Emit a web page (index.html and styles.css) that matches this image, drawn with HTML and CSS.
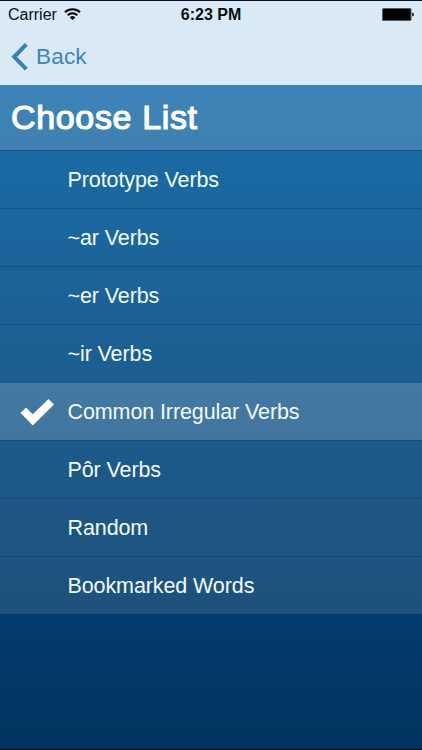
FILE: index.html
```html
<!DOCTYPE html>
<html lang="en">
<head>
    <meta charset="UTF-8">
    <meta name="viewport" content="width=device-width, initial-scale=1.0">
    <title>Choose List</title>
    <link rel="stylesheet" href="styles.css">
</head>
<body>
    <div class="screen">
        <!-- Status bar -->
        <div class="status-bar">
            <div class="carrier">
                <span>Carrier</span>
                <svg class="wifi" width="17" height="13" viewBox="0 0 17 13">
                    <path d="M1 4.3 A10.8 10.8 0 0 1 16 4.3" fill="none" stroke="#000" stroke-width="2.1"/>
                    <path d="M3.7 7.2 A7 7 0 0 1 13.3 7.2" fill="none" stroke="#000" stroke-width="2.1"/>
                    <path d="M8.5 12 L5.7 9.4 A4 4 0 0 1 11.3 9.4 Z" fill="#000"/>
                </svg>
            </div>
            <span class="time">6:23 PM</span>
            <svg class="battery" width="32" height="13" viewBox="0 0 32 13">
                <rect x="0" y="0" width="29.5" height="13" rx="1.5" fill="#555c61"/>
                <rect x="1" y="1" width="27.5" height="11" rx="0.5" fill="#000"/>
                <path d="M30.2 4.5 Q32 5 32 6.5 Q32 8 30.2 8.5 Z" fill="#111"/>
            </svg>
        </div>

        <!-- Navigation -->
        <div class="nav-bar">
            <a class="back" href="#">
                <svg width="17" height="28" viewBox="0 0 17 28">
                    <path d="M15.3 1.4 L3.2 13.8 L15.3 26.2" fill="none" stroke="#3480b7" stroke-width="4"/>
                </svg>
                <span>Back</span>
            </a>
        </div>

        <h1 class="title">Choose List</h1>

        <!-- Verb lists -->
        <ul class="list">
            <li class="row">Prototype Verbs</li>
            <li class="row">~ar Verbs</li>
            <li class="row">~er Verbs</li>
            <li class="row">~ir Verbs</li>
            <li class="row selected">
                <svg class="check" width="34" height="27" viewBox="0 0 34 27">
                    <path d="M0.5 14 L6 8.5 L12.8 15.2 L28.5 0 L34 5.5 L12.8 26.5 Z" fill="#fff"/>
                </svg>
                Common Irregular Verbs
            </li>
            <li class="row">Pôr Verbs</li>
            <li class="row">Random</li>
            <li class="row">Bookmarked Words</li>
        </ul>
    </div>
</body>
</html>
```

FILE: styles.css
```css
body {
    font-family: "Liberation Sans", Arial, sans-serif;
    margin: 0;
    padding: 0;
}

.screen {
    box-sizing: border-box;
    height: 750px;
    border-top: 1px solid #0c0e1c;
    border-bottom: 1px solid #020a18;
    background: linear-gradient(#136cab 150px, #033b6e 615px, #03345f 748px);
    overflow: hidden;
}

.status-bar {
    display: grid;
    grid-template-columns: 1fr auto 1fr;
    align-items: center;
    height: 28px;
    padding: 0 8px;
    background-color: #d9e9f5;
    color: #0b0f14;
    font-size: 16px;
}

.carrier {
    display: flex;
    align-items: center;
    gap: 7px;
}

.wifi {
    margin-bottom: 1px;
}

.time {
    font-weight: bold;
}

.battery {
    justify-self: end;
    margin-bottom: 1px;
}

.nav-bar {
    height: 56px;
    background-color: #d9e9f5;
}

.back {
    display: inline-flex;
    align-items: center;
    gap: 8px;
    height: 56px;
    padding-left: 11px;
    color: #3c86bd;
    font-size: 22.5px;
    letter-spacing: 0.2px;
    text-decoration: none;
}

.title {
    box-sizing: border-box;
    height: 65px;
    margin: 0;
    padding-left: 11px;
    background: linear-gradient(#3d84b8, #3f80b1);
    color: #fff;
    font-size: 34px;
    font-weight: normal;
    letter-spacing: 0.65px;
    line-height: 65px;
    -webkit-text-stroke: 1.2px #fff;
}

.list {
    margin: 0;
    padding: 0;
    list-style: none;
    background: linear-gradient(#1a6aa4, #1e517b);
}

.row {
    display: flex;
    align-items: center;
    box-sizing: border-box;
    height: 58px;
    padding-top: 1px;
    padding-left: 67.5px;
    border-top: 1px solid rgba(0, 50, 105, 0.3);
    color: #f2fbff;
    font-size: 21.5px;
    letter-spacing: -0.1px;
}

.row:first-child {
    border-top-color: #10568f;
}

.selected {
    padding-left: 20px;
    border-top-color: transparent;
    background-color: rgba(255, 255, 255, 0.17);
    background-clip: padding-box;
}

.check {
    margin-right: 13.5px;
}
```
